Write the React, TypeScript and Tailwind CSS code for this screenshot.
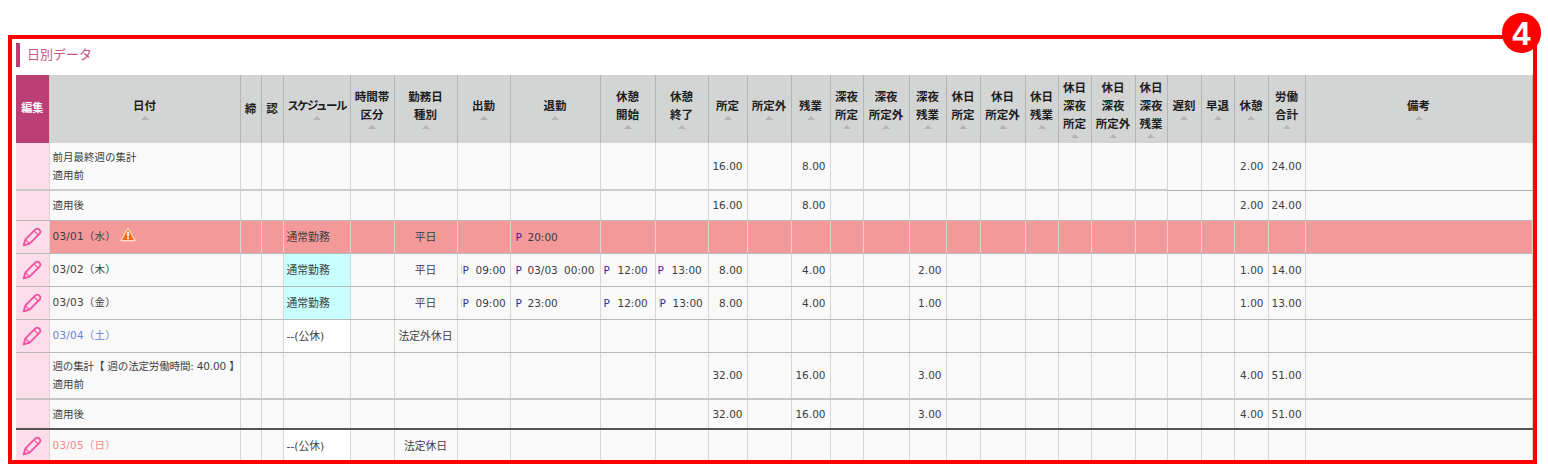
import React from 'react';

const COLS = [33, 191, 21, 22, 67, 44, 63, 53, 90, 55, 53, 39, 44, 39, 33, 46, 37, 34, 45, 33, 33, 44, 32, 34, 33, 34, 37, 227];

const HEADERS: string[][] = [
  ['日付'],
  ['締'],
  ['認'],
  ['スケジュール'],
  ['時間帯', '区分'],
  ['勤務日', '種別'],
  ['出勤'],
  ['退勤'],
  ['休憩', '開始'],
  ['休憩', '終了'],
  ['所定'],
  ['所定外'],
  ['残業'],
  ['深夜', '所定'],
  ['深夜', '所定外'],
  ['深夜', '残業'],
  ['休日', '所定'],
  ['休日', '所定外'],
  ['休日', '残業'],
  ['休日', '深夜', '所定'],
  ['休日', '深夜', '所定外'],
  ['休日', '深夜', '残業'],
  ['遅刻'],
  ['早退'],
  ['休憩'],
  ['労働', '合計'],
  ['備考'],
];

const PencilIcon = () => (
  <svg width="20" height="20" viewBox="0 0 20 20" fill="none" stroke="#f0509f" strokeWidth="1.8" strokeLinejoin="round" className="mx-auto block">
    <path d="M1.6 18.4 L3.4 12.4 L13.4 2.4 Q15.2 1 16.9 2.3 L17.8 3.2 Q19 5 17.6 6.6 L7.6 16.6 Z" />
    <path d="M3.4 12.4 L7.6 16.6" strokeWidth="1.2" />
    <path d="M12 3.8 L16.2 8" strokeWidth="1.2" />
  </svg>
);

const WarningIcon = () => (
  <svg width="16" height="15" viewBox="0 0 16 15" className="mb-[4px] ml-[4px] block">
    <path d="M8 1.2 L15 13.6 H1 Z" fill="#f26a05" stroke="#fbdcc4" strokeWidth="1.2" strokeLinejoin="round" />
    <rect x="7.1" y="4.8" width="1.8" height="4.6" fill="#fff" />
    <rect x="7.1" y="10.3" width="1.8" height="1.8" fill="#fff" />
  </svg>
);

const SortArrow = () => (
  <span className="mx-auto mt-[1px] mb-[1px] block h-0 w-0 border-x-[4px] border-b-[4px] border-x-transparent border-b-[#b4b4b4]" />
);

const Stamp = ({ time, className, sliver }: { time: string; className: string; sliver?: boolean }) => (
  <span className="flex items-center whitespace-nowrap">
    {sliver && <span className="mr-[1px] h-[9px] w-[1px] bg-[#cfe0a8]" />}
    <span className={`${className} text-[#33288c]`}>P</span>
    <span className="[word-spacing:3px]">{time}</span>
  </span>
);

type Cells = Record<number, React.ReactNode>;

const Num = ({ children }: { children: string }) => <div className="pr-px text-right">{children}</div>;

const Center = ({ children }: { children: string }) => <div className="pt-[2px] text-center text-[10.8px]">{children}</div>;

const Label = ({ children }: { children: string }) => <div className="pt-[2px] text-[10.8px]">{children}</div>;

const Day = ({ children, className = '' }: { children: string; className?: string }) => (
  <div className={`pb-[2px] tracking-[0.2px] ${className}`}>{children}</div>
);

const summary = (a: string, b: string, c: string | null, d: string, e: string): Cells => {
  const cells: Cells = { 11: <Num>{a}</Num>, 13: <Num>{b}</Num>, 25: <Num>{d}</Num>, 26: <Num>{e}</Num> };
  if (c) cells[16] = <Num>{c}</Num>;
  return cells;
};

const Row = ({
  height,
  cells,
  pencil,
  split,
  bg = 'bg-[#f9f9f9]',
  border = 'border-b-[#b9b9b9]',
  schedBg,
}: {
  height: string;
  cells: Cells;
  pencil?: boolean;
  split?: boolean;
  bg?: string;
  border?: string;
  schedBg?: string;
}) => (
  <tr className={`${height} ${bg}`}>
    {COLS.map((_, i) => (
      <td
        key={i}
        className={`overflow-hidden border-r border-b border-r-[#d6d6d6] p-0 align-middle ${
          split ? (i < 23 ? 'border-b-2 border-b-[#cbcbcb]' : 'border-b-[#adadad]') : border
        } ${i === 0 ? 'bg-[#fcdde9]' : i === 4 && schedBg ? schedBg : ''} ${i === 0 ? '' : i === 27 ? 'px-1' : 'px-[3px]'}`}
      >
        {i === 0 ? pencil && <PencilIcon /> : cells[i]}
      </td>
    ))}
  </tr>
);

export default function App() {
  const stampIn = <Stamp time="09:00" className="w-[13px]" sliver />;

  return (
    <div className="h-[469px] bg-white pt-[35px] pl-2 font-['DejaVu_Sans','Noto_Sans_CJK_JP',sans-serif] text-[10.5px] leading-[18px] text-[#3e3e3e]">
      <div className="relative h-[429px] w-[1529px]">
        <div className="h-full overflow-hidden border-4 border-[#ff0000] bg-white pl-1">
          <div className="flex h-[36px] items-start pt-[4px]">
            <div className="h-[24px] w-[4px] bg-[#bb3f74]" />
            <h2 className="ml-[7px] text-[13px] leading-[24px] font-normal text-[#c4567f]">日別データ</h2>
          </div>

          <table className="w-[1516px] table-fixed border-collapse">
            <colgroup>
              {COLS.map((w, i) => (
                <col key={i} style={{ width: w }} />
              ))}
            </colgroup>
            <thead>
              <tr className="h-[68px] bg-[#d3d5d4]">
                <th className="border-r border-[#c8c8c8] bg-[#bb3f74] p-0 text-[11px] font-bold text-white">編集</th>
                {HEADERS.map((lines, i) => (
                  <th
                    key={i}
                    className="border-r border-r-[#b4b6b5] p-0 text-center align-middle text-[11.5px] font-bold whitespace-nowrap text-[#1c1c1c]"
                  >
                    {lines.map((l) => (
                      <div key={l} className={l === 'スケジュール' ? 'tracking-[-1.6px]' : ''}>
                        {l}
                      </div>
                    ))}
                    {i === 1 || i === 2 ? null : <SortArrow />}
                  </th>
                ))}
              </tr>
            </thead>
            <tbody>
              <Row
                height="h-[47px]"
                split
                cells={{
                  1: (
                    <>
                      <div>前月最終週の集計</div>
                      <div>適用前</div>
                    </>
                  ),
                  ...summary('16.00', '8.00', null, '2.00', '24.00'),
                }}
              />
              <Row height="h-[30px]" cells={{ 1: '適用後', ...summary('16.00', '8.00', null, '2.00', '24.00') }} />
              <Row
                height="h-[33px]"
                pencil
                bg="bg-[#f49999]"
                cells={{
                  1: (
                    <div className="flex items-center">
                      <Day>03/01（水）</Day>
                      <WarningIcon />
                    </div>
                  ),
                  4: <Label>通常勤務</Label>,
                  6: <Center>平日</Center>,
                  8: <Stamp time="20:00" className="ml-[2px] w-[12px]" />,
                }}
              />
              <Row
                height="h-[33px]"
                pencil
                schedBg="bg-[#c8ffff]"
                cells={{
                  1: <Day>03/02（木）</Day>,
                  4: <Label>通常勤務</Label>,
                  6: <Center>平日</Center>,
                  7: stampIn,
                  8: <Stamp time="03/03 00:00" className="ml-[2px] w-[12px]" />,
                  9: <Stamp time="12:00" className="w-[14px]" />,
                  10: <Stamp time="13:00" className="-ml-px w-[14px]" />,
                  11: <Num>8.00</Num>,
                  13: <Num>4.00</Num>,
                  16: <Num>2.00</Num>,
                  25: <Num>1.00</Num>,
                  26: <Num>14.00</Num>,
                }}
              />
              <Row
                height="h-[33px]"
                pencil
                schedBg="bg-[#c8ffff]"
                cells={{
                  1: <Day>03/03（金）</Day>,
                  4: <Label>通常勤務</Label>,
                  6: <Center>平日</Center>,
                  7: stampIn,
                  8: <Stamp time="23:00" className="ml-[2px] w-[12px]" />,
                  9: <Stamp time="12:00" className="w-[14px]" />,
                  10: <Stamp time="13:00" className="-ml-px w-[13px]" sliver />,
                  11: <Num>8.00</Num>,
                  13: <Num>4.00</Num>,
                  16: <Num>1.00</Num>,
                  25: <Num>1.00</Num>,
                  26: <Num>13.00</Num>,
                }}
              />
              <Row
                height="h-[33px]"
                pencil
                schedBg="bg-white"
                cells={{
                  1: <Day className="text-[#6b84cf]">03/04（土）</Day>,
                  4: <Label>--(公休)</Label>,
                  6: <Center>法定外休日</Center>,
                }}
              />
              <Row
                height="h-[47px]"
                border="border-b-2 border-b-[#c4c4c4]"
                cells={{
                  1: (
                    <>
                      <div className="whitespace-nowrap tracking-[-0.15px]">週の集計【 週の法定労働時間: 40.00 】</div>
                      <div>適用前</div>
                    </>
                  ),
                  ...summary('32.00', '16.00', '3.00', '4.00', '51.00'),
                }}
              />
              <Row
                height="h-[30px]"
                border="border-b-2 border-b-[#555]"
                cells={{ 1: '適用後', ...summary('32.00', '16.00', '3.00', '4.00', '51.00') }}
              />
              <Row
                height="h-[33px]"
                pencil
                schedBg="bg-white"
                cells={{
                  1: <Day className="text-[#f08a8a]">03/05（日）</Day>,
                  4: <Label>--(公休)</Label>,
                  6: <Center>法定休日</Center>,
                }}
              />
            </tbody>
          </table>
        </div>

        <div className="absolute -top-[22px] right-[-4px] flex h-[40px] w-[39px] items-center justify-center rounded-full bg-[#ff0000] font-['Liberation_Sans',sans-serif] text-[33px] leading-none font-bold text-white">
          4
        </div>
      </div>
    </div>
  );
}
